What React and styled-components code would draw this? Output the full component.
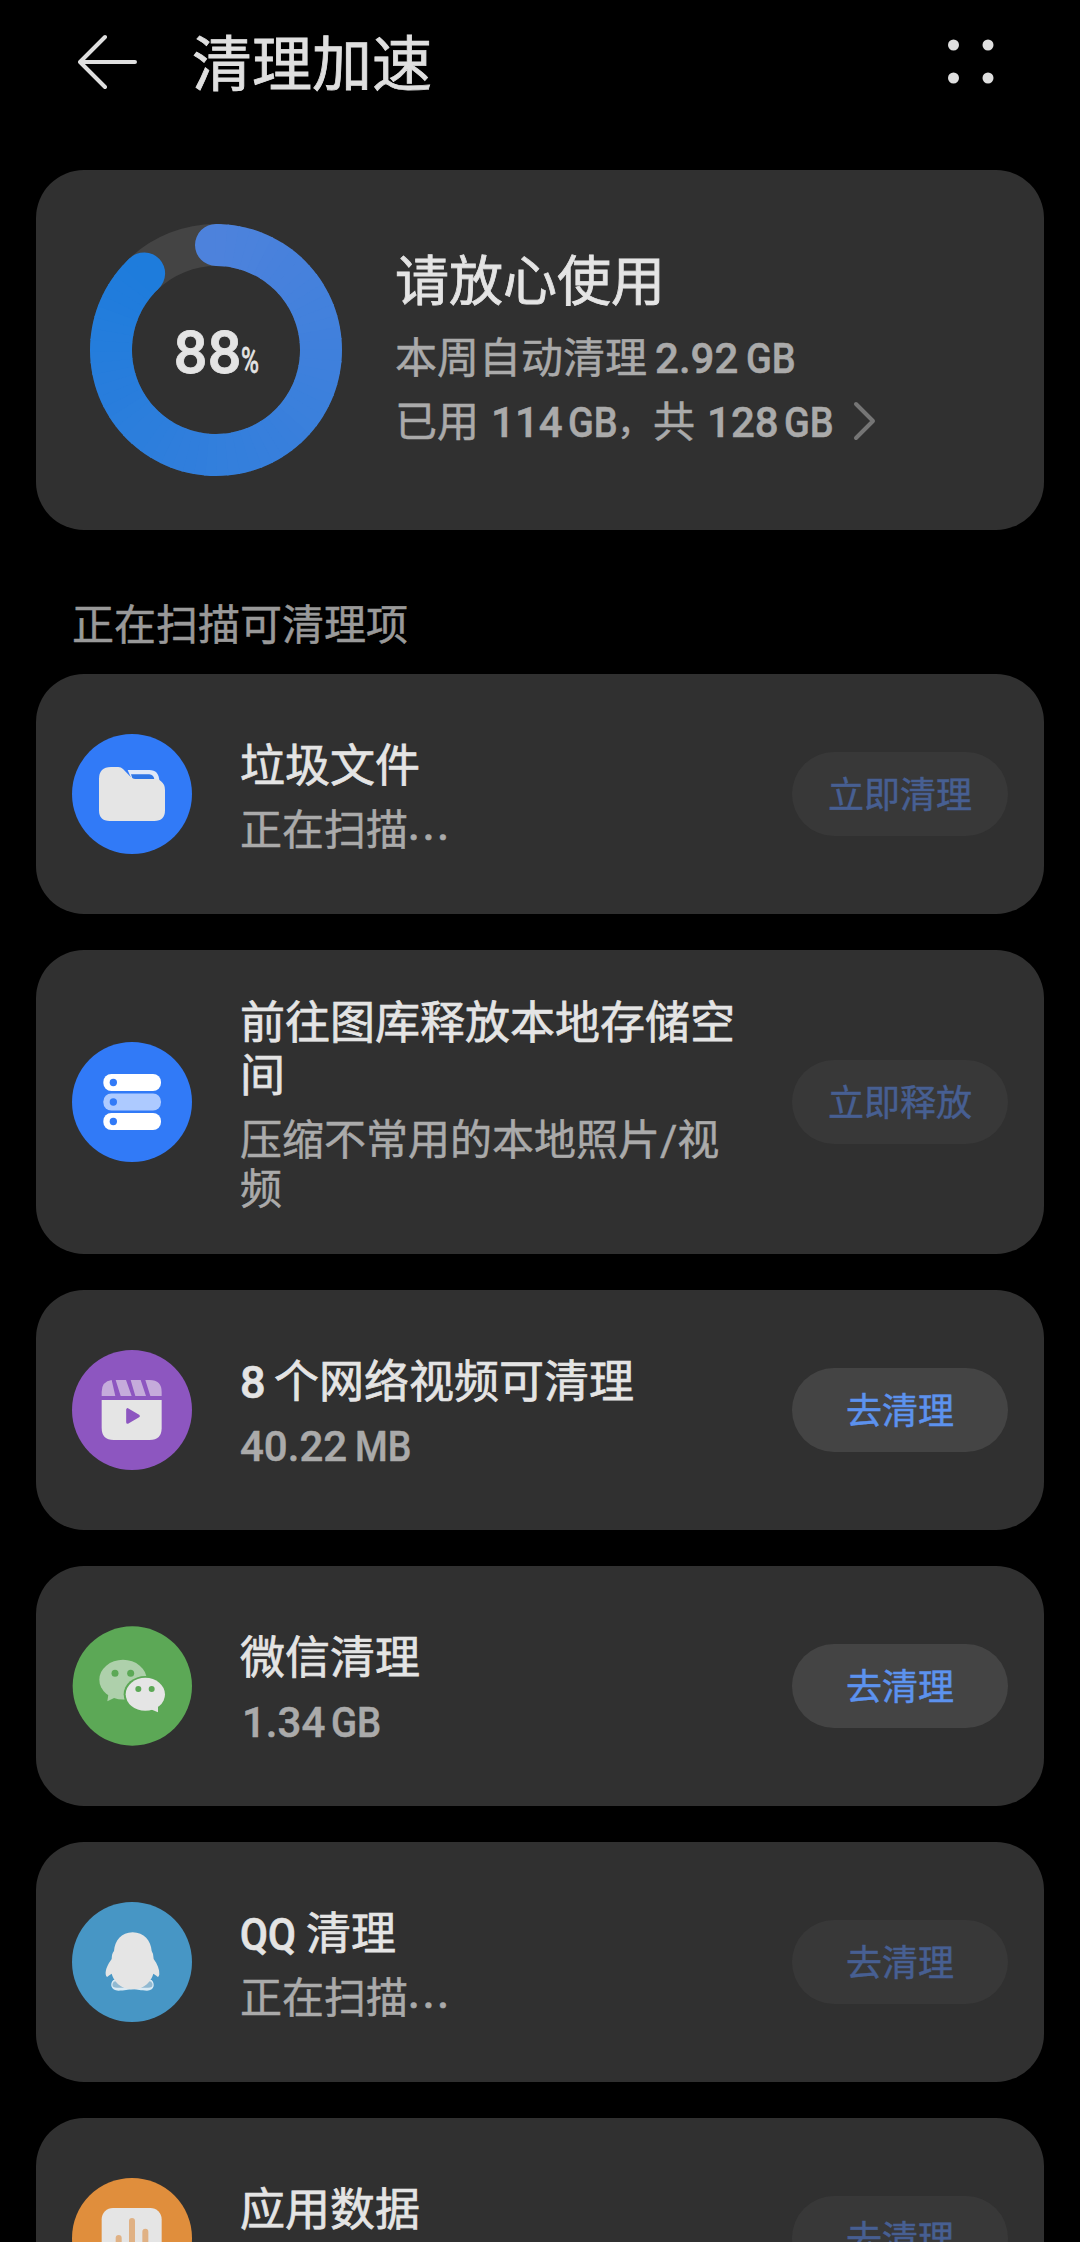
import React from "react";
import styled, { createGlobalStyle } from "styled-components";

const GlobalStyle = createGlobalStyle`
  html, body { margin: 0; padding: 0; background: #000; }
  body {
    font-family: Roboto, "Noto Sans CJK SC", sans-serif;
    -webkit-text-stroke-width: 0.5px;
  }
  * { box-sizing: border-box; }
`;

const Screen = styled.div`
  width: 1080px;
  height: 2242px;
  overflow: hidden;
  background: #000;
  display: flex;
  flex-direction: column;
`;

const Header = styled.header`
  height: 170px;
  flex: none;
  padding: 26px 85px 0 78px;
  display: flex;
  align-items: flex-start;
`;

const HeaderTitle = styled.h1`
  flex: 1;
  margin: 4px 0 0 54px;
  font-size: 60px;
  line-height: 72px;
  font-weight: 400;
  color: #dfdfdf;
  -webkit-text-stroke-width: 0.8px;
`;

const BackIcon = styled.svg`
  width: 60px;
  height: 72px;
`;

const MenuIcon = styled.svg`
  width: 48px;
  height: 72px;
  margin-right: -1px;
`;

const Card = styled.section`
  flex: none;
  margin: 0 36px;
  border-radius: 48px;
  background: #303030;
  display: flex;
  align-items: center;
`;

const SummaryCard = styled(Card)`
  height: 360px;
  padding-left: 54px;
`;

const RingBox = styled.div`
  display: grid;
  width: 252px;
  height: 252px;
  place-items: center;
  > * { grid-area: 1 / 1; }
`;

const RingValue = styled.div`
  display: flex;
  align-items: baseline;
  padding-top: 14px;
  color: #e4e4e4;
  font-size: 60px;
  line-height: 60px;
  font-weight: 500;
  -webkit-text-stroke-width: 0.8px;
`;

const SummaryText = styled.div`
  margin-left: 53px;
  padding-top: 5px;
  display: flex;
  flex-direction: column;
`;

const SummaryTitle = styled.h2`
  margin: 0 0 12px;
  font-size: 54px;
  line-height: 64px;
  font-weight: 400;
  color: #e4e4e4;
  -webkit-text-stroke-width: 0.8px;
`;

const SummaryLine = styled.div`
  display: flex;
  align-items: center;
  height: 64px;
  font-size: 42px;
  line-height: 64px;
  white-space: pre;
  color: #aaa;
`;

const Run = styled.span`
  display: inline-block;
  width: ${(p) => p.$w}px;
  margin-left: ${(p) => p.$gap || 0}px;
  white-space: pre;
  font-weight: ${(p) => p.$weight || 500};
  font-size: ${(p) => p.$size || "inherit"};
  transform: scaleX(${(p) => p.$scale || 1});
  transform-origin: left center;
`;

const Comma = styled.span`
  width: 36px;
  font-size: 36px;
`;

const Chevron = styled.svg`
  width: 24px;
  height: 40px;
  margin-left: 20px;
  margin-bottom: 4px;
`;

const SectionLabel = styled.div`
  flex: none;
  height: 144px;
  padding: 69px 0 0 72px;
  font-size: 42px;
  line-height: 54px;
  color: #999;
`;

const List = styled.div`
  display: flex;
  flex-direction: column;
  gap: 36px;
`;

const ItemCard = styled(Card)`
  height: ${(p) => (p.$tall ? 304 : 240)}px;
  padding: 0 36px;
`;

const ItemIcon = styled.svg`
  flex: none;
  width: 120px;
  height: 120px;
`;

const ItemText = styled.div`
  flex: none;
  width: 504px;
  margin-left: 48px;
  padding-top: 6px;
`;

const ItemTitle = styled.div`
  font-size: 45px;
  line-height: 53px;
  margin-bottom: 13px;
  color: #e4e4e4;
  -webkit-text-stroke-width: 0.7px;
`;

const ItemSub = styled.div`
  font-size: 42px;
  line-height: 49px;
  color: #aaa;
`;

const Dots = styled.span`
  font-weight: 500;
  letter-spacing: 3px;
  line-height: 0;
  vertical-align: 5px;
`;

const Action = styled.button`
  width: 216px;
  height: 84px;
  margin-left: auto;
  padding: 4px 0 0;
  border: 0;
  border-radius: 42px;
  font-family: inherit;
  font-size: 36px;
  line-height: 42px;
  background: ${(p) => (p.disabled ? "#383838" : "#444")};
  color: ${(p) => (p.disabled ? "#475f92" : "#5c92ee")};
`;

const START = [77, 130, 220];
const END = [30, 124, 220];

function point(deg) {
  const a = ((deg - 90) * Math.PI) / 180;
  return `${126 + 105 * Math.cos(a)} ${126 + 105 * Math.sin(a)}`;
}

function mix(t) {
  return `rgb(${START.map((v, i) => Math.round(v + (END[i] - v) * t)).join(",")})`;
}

function Ring({ percent }) {
  const sweep = percent * 3.6;
  const count = 60;
  const step = sweep / count;
  const arc = (from, to) => `M${point(from)}A105 105 0 0 1 ${point(to)}`;
  return (
    <svg width="252" height="252" viewBox="0 0 252 252" fill="none" strokeWidth="42">
      <circle cx="126" cy="126" r="105" stroke="#444" />
      <path d={arc(0, 0.5)} stroke={mix(0)} strokeLinecap="round" />
      <path d={arc(sweep - 0.5, sweep)} stroke={mix(1)} strokeLinecap="round" />
      {Array.from({ length: count }, (_, i) => (
        <path
          key={i}
          d={arc(i * step, Math.min(sweep, (i + 1) * step + 0.6))}
          stroke={mix(i / (count - 1))}
        />
      ))}
    </svg>
  );
}

const icons = {
  folder: (
    <>
      <circle cx="180" cy="180" r="180" fill="#317af7" />
      <path d="M167 108H232Q261 108 262 142L250 150H185Z" fill="#dfe8f8" />
      <path d="M177 121H232Q245 122 247 136H182Z" fill="#2f76e6" />
      <path
        d="M81 135Q81 99 117 99H139Q147 99 153 105L177 130Q182 135 189 135H254Q262 136 267 142Q279 151 279 168V229Q279 261 247 261H113Q81 261 81 229Z"
        fill="#e5e5e5"
      />
    </>
  ),
  storage: (
    <>
      <circle cx="180" cy="180" r="180" fill="#317af7" />
      <rect x="94" y="96" width="173" height="51" rx="24" fill="#fff" />
      <rect x="94" y="154.500" width="173" height="51" rx="24" fill="#adcaff" />
      <rect x="94" y="213" width="173" height="51" rx="24" fill="#fff" />
      <circle cx="124" cy="121.500" r="11" fill="#317af7" />
      <circle cx="124" cy="180" r="11" fill="#317af7" />
      <circle cx="124" cy="238.500" r="11" fill="#317af7" />
    </>
  ),
  video: (
    <>
      <circle cx="180" cy="180" r="180" fill="#8d56c0" />
      <path
        d="M89 138V126Q89 94 119 90L130 138ZM131 90H162L179 138H146ZM176 90H206L222 138H190ZM220 90H233Q269 90 269 126V138H235Z"
        fill="#c5abdb"
      />
      <path d="M89 150H269V234Q269 270 233 270H125Q89 270 89 234Z" fill="#e5e5e5" />
      <path
        d="M167 179V217L199 198Z"
        fill="#8d56c0"
        stroke="#8d56c0"
        strokeWidth="9"
        strokeLinejoin="round"
      />
    </>
  ),
  wechat: (
    <>
      <circle cx="181" cy="180" r="179" fill="#5ca856" />
      <ellipse cx="153" cy="161" rx="71" ry="59.500" fill="#aed0ab" />
      <path d="M110 200L106 226L128 215L156 220Z" fill="#aed0ab" />
      <circle cx="129" cy="142" r="10.500" fill="#5ca856" />
      <circle cx="176" cy="142" r="10.500" fill="#5ca856" />
      <ellipse cx="220" cy="205" rx="65" ry="55" fill="#5ca856" />
      <ellipse cx="220" cy="205" rx="59" ry="49.500" fill="#e5e5e5" />
      <path d="M258 236L258 259L236 250Z" fill="#e5e5e5" />
      <circle cx="199" cy="189" r="9" fill="#5ca856" />
      <circle cx="239" cy="189" r="9" fill="#5ca856" />
    </>
  ),
  penguin: (
    <>
      <circle cx="180" cy="180" r="180" fill="#4796c5" />
      <path
        d="M124 234C112 246 117 266 139 266C158 266 168 263 182 262C197 263 206 266 225 266C247 266 250 246 239 234Z"
        fill="#d9eaf4"
      />
      <path d="M125 239Q119 246 122 253Q126 259 157 257L135 236Z" fill="#91b9d1" />
      <path d="M238 239Q244 246 241 253Q237 259 206 257L228 236Z" fill="#91b9d1" />
      <path
        d="M182 91C148 91 128 116 126 147Q119 155 119 171C108 186 100 202 101 217Q103 229 109 222L119 215C125 236 144 262 182 262C219 262 238 236 244 215L254 222Q260 229 262 217C263 202 256 186 245 171Q245 155 239 147C237 116 216 91 182 91Z"
        fill="#e5e5e5"
      />
    </>
  ),
  data: (
    <>
      <circle cx="180" cy="180" r="180" fill="#e08e3c" />
      <rect x="89" y="90" width="180" height="180" rx="34" fill="#e5e5e5" />
      <path
        d="M140 180V230M180 129V230M220 161V230"
        stroke="#e0b184"
        strokeWidth="18"
        strokeLinecap="round"
      />
    </>
  ),
};

const scanning = (
  <>
    正在扫描<Dots>...</Dots>
  </>
);

const items = [
  { icon: "folder", title: "垃圾文件", sub: scanning, action: "立即清理", disabled: true },
  {
    icon: "storage",
    title: "前往图库释放本地存储空间",
    sub: "压缩不常用的本地照片/视频",
    action: "立即释放",
    disabled: true,
    tall: true,
  },
  {
    icon: "video",
    title: (
      <>
        <Run $w={34}>8</Run>个网络视频可清理
      </>
    ),
    sub: (
      <>
        <Run $w={115}>40.22</Run>
        <Run $w={60} $scale={0.89}>MB</Run>
      </>
    ),
    action: "去清理",
  },
  {
    icon: "wechat",
    title: "微信清理",
    sub: (
      <>
        <Run $w={89} $gap={2}>1.34</Run>
        <Run $w={52} $scale={0.91}>GB</Run>
      </>
    ),
    action: "去清理",
  },
  {
    icon: "penguin",
    title: (
      <>
        <Run $w={66} $scale={0.9}>QQ</Run>清理
      </>
    ),
    sub: scanning,
    action: "去清理",
    disabled: true,
  },
  { icon: "data", title: "应用数据", sub: scanning, action: "去清理", disabled: true },
];

export default function App() {
  return (
    <Screen>
      <GlobalStyle />
      <Header>
        <BackIcon viewBox="0 0 60 72" fill="none" stroke="#dfdfdf" strokeWidth="4" strokeLinecap="round" strokeLinejoin="round">
          <path d="M27 11L2 36L27 61M3 36H57" />
        </BackIcon>
        <HeaderTitle>清理加速</HeaderTitle>
        <MenuIcon viewBox="0 0 48 72" fill="#dfdfdf">
          <circle cx="5.500" cy="19" r="5.500" />
          <circle cx="40" cy="19" r="5.500" />
          <circle cx="5.500" cy="52" r="5.500" />
          <circle cx="40" cy="52" r="5.500" />
        </MenuIcon>
      </Header>

      <SummaryCard>
        <RingBox>
          <Ring percent={88} />
          <RingValue>
            <Run $w={67}>88</Run>
            <Run $w={18} $size="36px" $scale={0.68} $weight={400}>%</Run>
          </RingValue>
        </RingBox>
        <SummaryText>
          <SummaryTitle>请放心使用</SummaryTitle>
          <SummaryLine>
            本周自动清理
            <Run $w={91} $gap={8}>2.92</Run>
            <Run $w={50} $scale={0.9}>GB</Run>
          </SummaryLine>
          <SummaryLine>
            已用
            <Run $w={77} $gap={12}>114</Run>
            <Run $w={49} $scale={0.9}>GB</Run>
            <Comma>，</Comma>共
            <Run $w={77} $gap={12}>128</Run>
            <Run $w={49} $scale={0.9}>GB</Run>
            <Chevron viewBox="0 0 24 40" fill="none" stroke="#757575" strokeWidth="4" strokeLinecap="round" strokeLinejoin="round">
              <path d="M3 3L20 20L3 37" />
            </Chevron>
          </SummaryLine>
        </SummaryText>
      </SummaryCard>

      <SectionLabel>正在扫描可清理项</SectionLabel>

      <List>
        {items.map((item) => (
          <ItemCard key={item.icon} $tall={item.tall}>
            <ItemIcon viewBox="0 0 360 360">{icons[item.icon]}</ItemIcon>
            <ItemText>
              <ItemTitle>{item.title}</ItemTitle>
              <ItemSub>{item.sub}</ItemSub>
            </ItemText>
            <Action disabled={item.disabled}>{item.action}</Action>
          </ItemCard>
        ))}
      </List>
    </Screen>
  );
}
